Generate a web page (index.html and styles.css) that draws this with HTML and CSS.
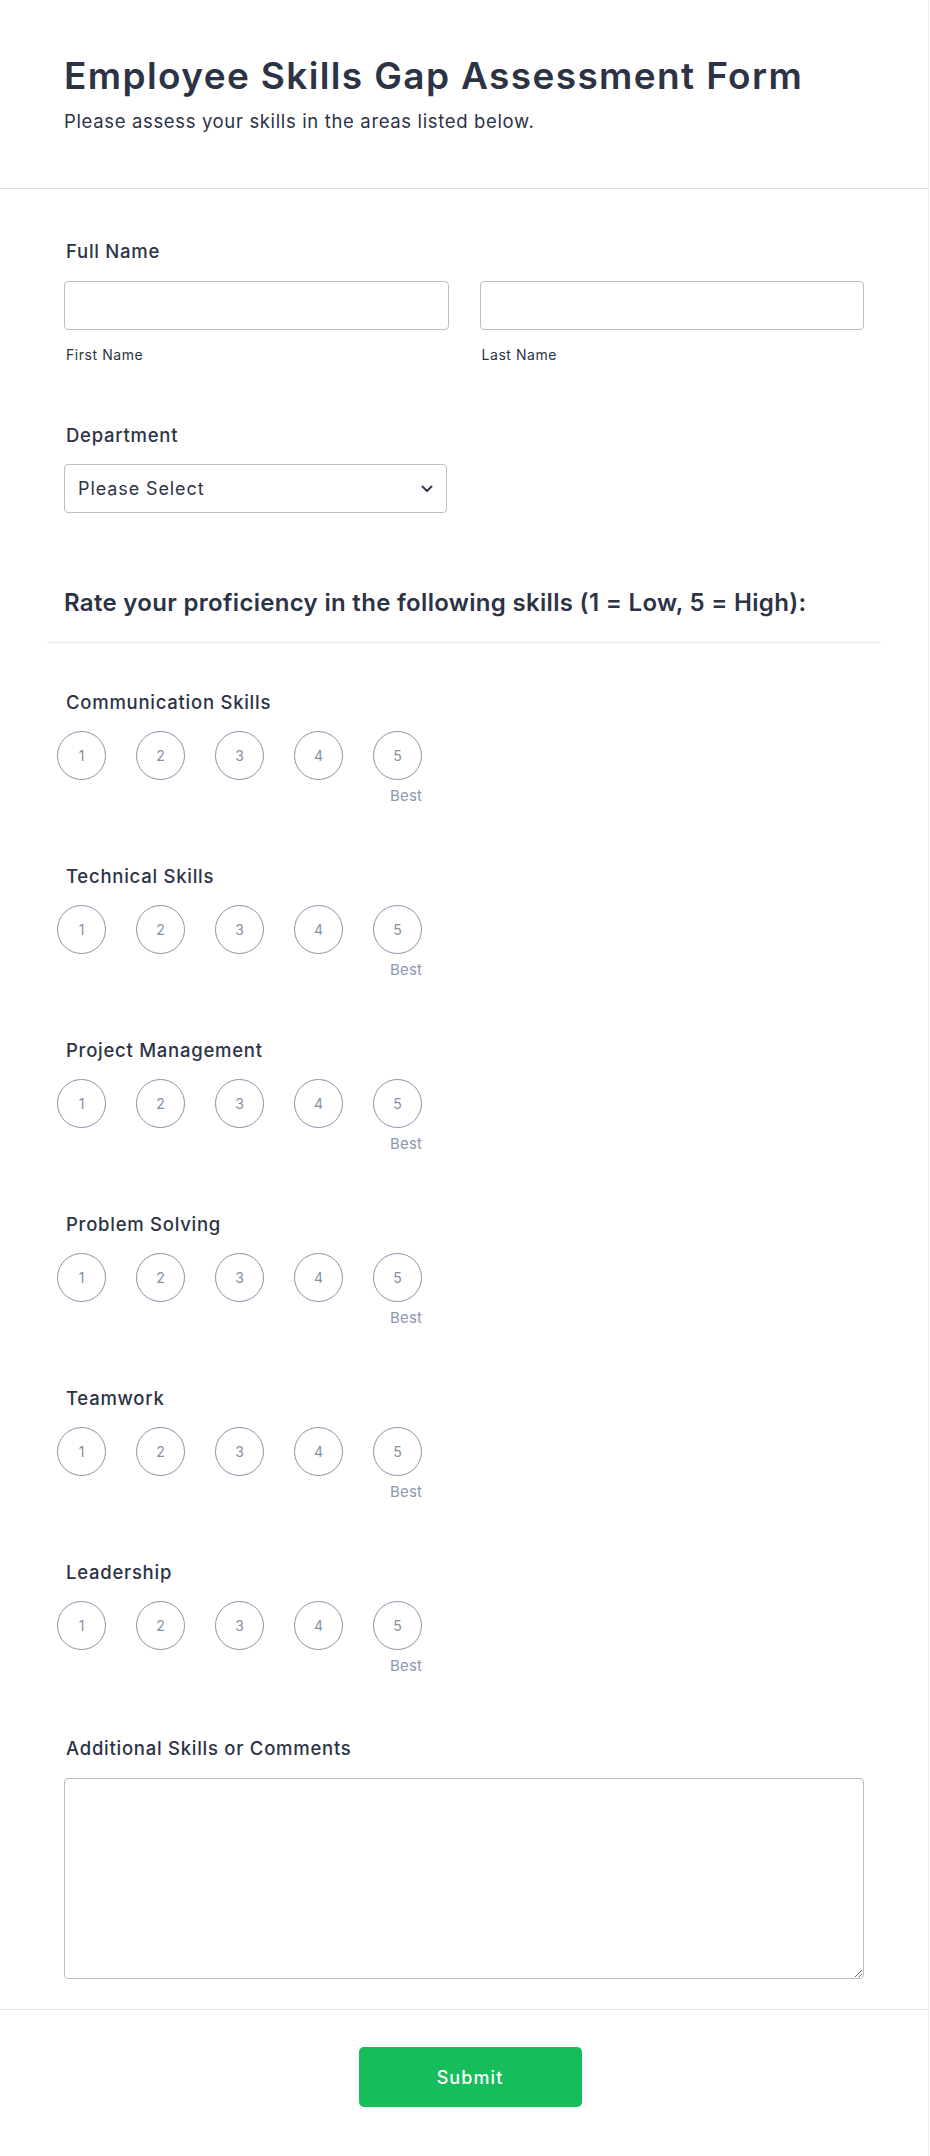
FILE: index.html
```html
<!DOCTYPE html>
<html lang="en">
<head>
    <meta charset="UTF-8">
    <meta name="viewport" content="width=device-width, initial-scale=1.0">
    <title>Employee Skills Gap Assessment Form</title>
    <link rel="stylesheet" href="styles.css">
</head>

<body>
    <form class="form" onsubmit="return false">
        <header class="form-header">
            <h1>Employee Skills Gap Assessment Form</h1>
            <p>Please assess your skills in the areas listed below.</p>
        </header>

        <div class="form-body">
            <div class="field">
                <label class="field-label">Full Name</label>
                <div class="name-row">
                    <div class="name-col">
                        <input type="text" class="text-input">
                        <span class="sublabel">First Name</span>
                    </div>
                    <div class="name-col">
                        <input type="text" class="text-input">
                        <span class="sublabel">Last Name</span>
                    </div>
                </div>
            </div>

            <div class="field">
                <label class="field-label">Department</label>
                <div class="select-wrap">
                    <select class="select-input">
                        <option>Please Select</option>
                        <option>Engineering</option>
                        <option>Sales</option>
                        <option>Marketing</option>
                        <option>Human Resources</option>
                    </select>
                    <svg class="chevron" width="12" height="8" viewBox="0 0 12 8">
                        <path d="M1.5 1.5 L6 6 L10.5 1.5" fill="none" stroke="#343c52" stroke-width="2" stroke-linecap="round" stroke-linejoin="round"/>
                    </svg>
                </div>
            </div>

            <div class="section-head">
                <h2>Rate your proficiency in the following skills (1 = Low, 5 = High):</h2>
            </div>

            <div class="field rating-field">
                <label class="field-label">Communication Skills</label>
                <div class="rating">
                    <div class="scale">
                        <span class="dot">1</span><span class="dot">2</span><span class="dot">3</span><span class="dot">4</span><span class="dot">5</span>
                    </div>
                    <span class="best">Best</span>
                </div>
            </div>

            <div class="field rating-field">
                <label class="field-label">Technical Skills</label>
                <div class="rating">
                    <div class="scale">
                        <span class="dot">1</span><span class="dot">2</span><span class="dot">3</span><span class="dot">4</span><span class="dot">5</span>
                    </div>
                    <span class="best">Best</span>
                </div>
            </div>

            <div class="field rating-field">
                <label class="field-label">Project Management</label>
                <div class="rating">
                    <div class="scale">
                        <span class="dot">1</span><span class="dot">2</span><span class="dot">3</span><span class="dot">4</span><span class="dot">5</span>
                    </div>
                    <span class="best">Best</span>
                </div>
            </div>

            <div class="field rating-field">
                <label class="field-label">Problem Solving</label>
                <div class="rating">
                    <div class="scale">
                        <span class="dot">1</span><span class="dot">2</span><span class="dot">3</span><span class="dot">4</span><span class="dot">5</span>
                    </div>
                    <span class="best">Best</span>
                </div>
            </div>

            <div class="field rating-field">
                <label class="field-label">Teamwork</label>
                <div class="rating">
                    <div class="scale">
                        <span class="dot">1</span><span class="dot">2</span><span class="dot">3</span><span class="dot">4</span><span class="dot">5</span>
                    </div>
                    <span class="best">Best</span>
                </div>
            </div>

            <div class="field rating-field">
                <label class="field-label">Leadership</label>
                <div class="rating">
                    <div class="scale">
                        <span class="dot">1</span><span class="dot">2</span><span class="dot">3</span><span class="dot">4</span><span class="dot">5</span>
                    </div>
                    <span class="best">Best</span>
                </div>
            </div>

            <div class="field comments-field">
                <label class="field-label">Additional Skills or Comments</label>
                <textarea class="comments"></textarea>
            </div>
        </div>

        <div class="form-footer">
            <button type="submit" class="submit-btn">Submit</button>
        </div>
    </form>
</body>
</html>
```

FILE: styles.css
```css
/* Page */
body {
    font-family: "Inter", "Noto Sans", Arial, sans-serif;
    background-color: #ffffff;
    color: #2c3345;
    margin: 0;
}

.form {
    width: 929px;
    border-right: 1px solid #eceef3;
    min-height: 2156px;
    box-sizing: border-box;
}

/* Header */
.form-header {
    padding: 54px 64px 53px 64px;
    border-bottom: 1px solid #dcdde8;
}

.form-header h1 {
    font-size: 37px;
    font-weight: 600;
    line-height: 43px;
    letter-spacing: 0.037em;
    margin: 0;
    color: #2c3345;
}

.form-header p {
    font-size: 18.5px;
    line-height: 27px;
    letter-spacing: 0.035em;
    margin: 11px 0 0 0;
    color: #2c3345;
}

/* Body */
.form-body {
    padding: 0 47px;
}

.field {
    padding: 0 17px;
}

.field-label {
    display: block;
    font-size: 18.5px;
    font-weight: 500;
    line-height: 25px;
    letter-spacing: 0.04em;
    padding-left: 2px;
    color: #2c3345;
}

.field:first-child {
    padding-top: 50px;
}

.name-row {
    display: flex;
    gap: 31px;
    margin-top: 17px;
}

.name-col {
    flex: 1;
    display: flex;
    flex-direction: column;
}

.text-input, .select-input, .comments {
    box-sizing: border-box;
    border: 1px solid #b8bdc9;
    border-radius: 4px;
    background-color: #ffffff;
    font-family: inherit;
    color: #2c3345;
    outline: none;
}

.text-input {
    width: 100%;
    height: 49px;
    font-size: 18px;
    padding: 0 12px;
}

.sublabel {
    font-size: 14px;
    line-height: 20px;
    letter-spacing: 0.04em;
    margin-top: 15px;
    padding-left: 2px;
    color: #2c3345;
}

.field + .field {
    padding-top: 58px;
}

/* Department select */
.select-wrap {
    position: relative;
    width: 383px;
    margin-top: 16px;
}

.select-input {
    width: 100%;
    height: 49px;
    font-size: 18px;
    letter-spacing: 0.05em;
    padding: 0 40px 0 13px;
    appearance: none;
    -webkit-appearance: none;
}

.chevron {
    position: absolute;
    right: 14px;
    top: 21px;
    pointer-events: none;
}

/* Section heading */
.section-head {
    margin-top: 74px;
    padding: 0 17px 24px 17px;
    border-bottom: 1px solid #e9eaef;
}

.section-head h2 {
    font-size: 24px;
    font-weight: 600;
    line-height: 31px;
    letter-spacing: 0.013em;
    margin: 0;
    color: #2c3345;
}

.section-head + .field {
    padding-top: 47px;
}

/* Ratings */
.rating-field + .rating-field {
    padding-top: 58px;
}

.rating {
    display: inline-flex;
    flex-direction: column;
    align-items: flex-end;
    margin-top: 16px;
    margin-left: -7px;
}

.scale {
    display: flex;
    gap: 30px;
}

.dot {
    box-sizing: border-box;
    width: 49px;
    height: 49px;
    border: 1px solid #8a92a9;
    border-radius: 50%;
    display: flex;
    align-items: center;
    justify-content: center;
    font-size: 14px;
    color: #858fa5;
}

.best {
    font-size: 15px;
    line-height: 20px;
    letter-spacing: 0.01em;
    margin-top: 6px;
    color: #8d98ae;
}

/* Comments */
.rating-field + .comments-field {
    padding-top: 60px;
}

.comments {
    display: block;
    width: 100%;
    height: 201px;
    margin-top: 17px;
    font-size: 16px;
    padding: 10px 12px;
}

/* Footer */
.form-footer {
    margin-top: 30px;
    border-top: 1px solid #e6e7ee;
    padding: 37px 0 50px 0;
    text-align: center;
}

.submit-btn {
    width: 223px;
    height: 60px;
    border: none;
    border-radius: 5px;
    background-color: #18bd5b;
    color: #ffffff;
    font-family: inherit;
    font-size: 18px;
    font-weight: 500;
    letter-spacing: 0.06em;
    cursor: pointer;
    margin-left: 12px;
}

.submit-btn:hover {
    background-color: #16a951;
}
```
